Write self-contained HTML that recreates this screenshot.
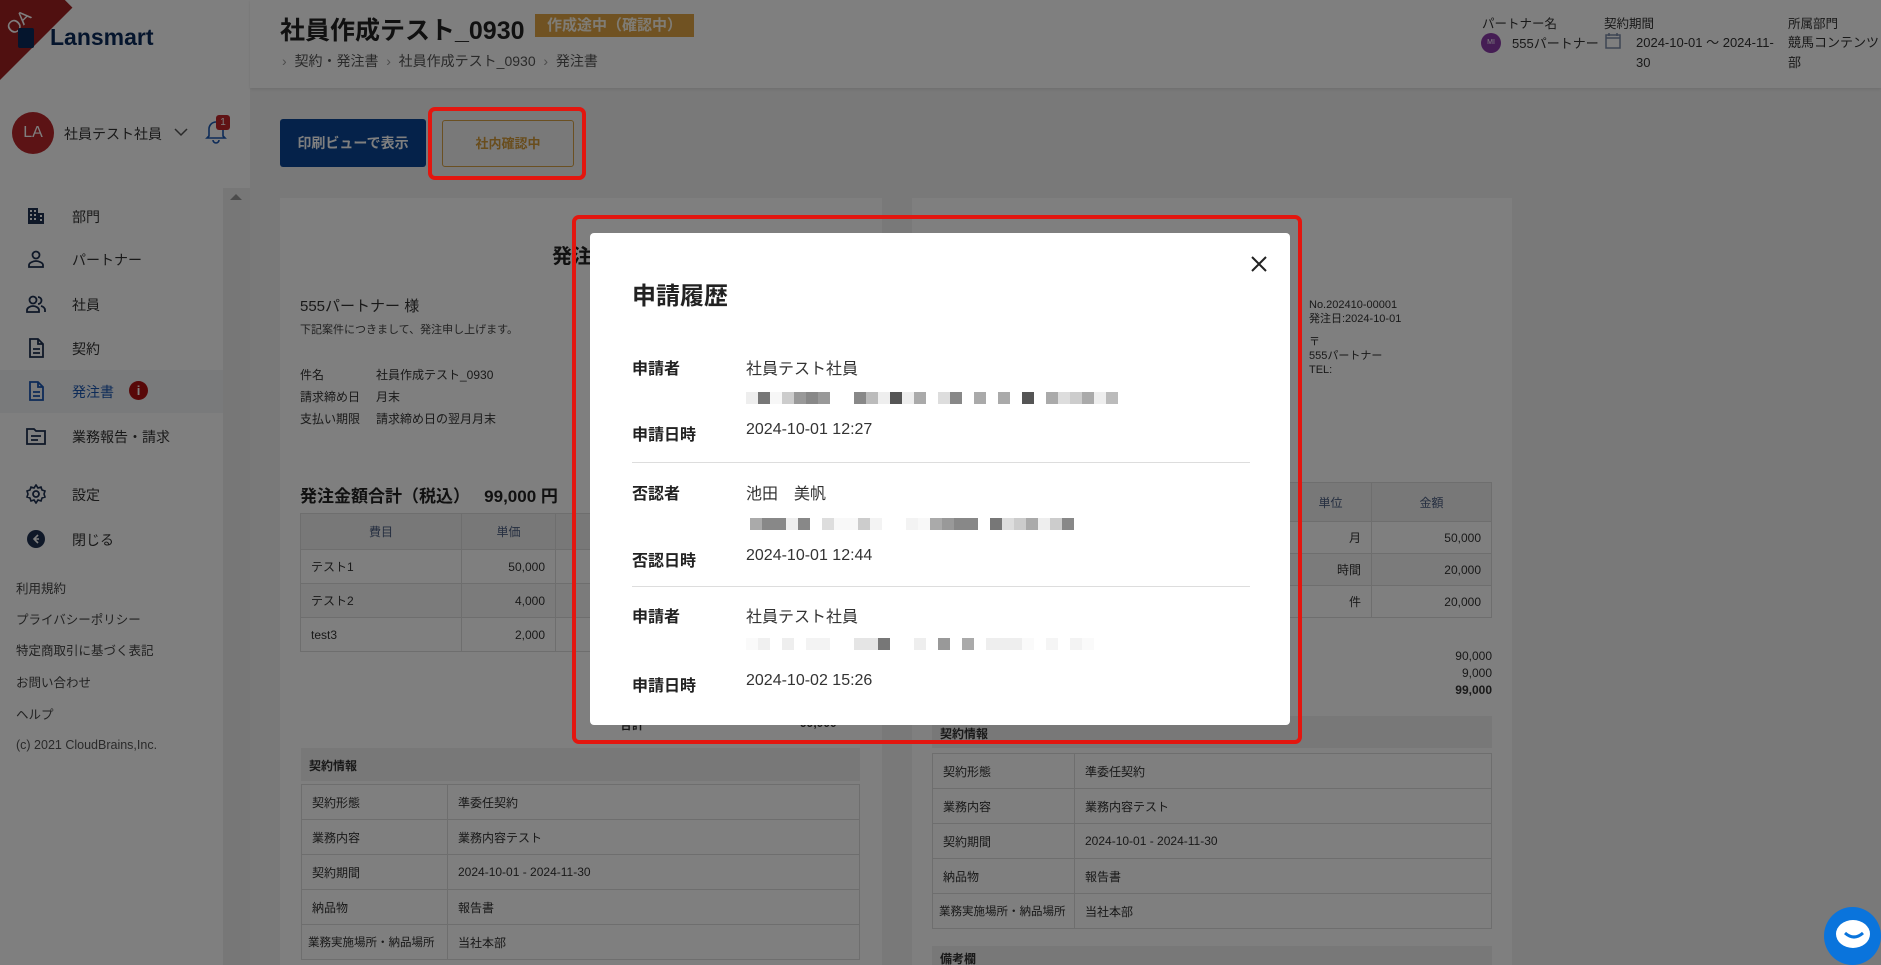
<!DOCTYPE html>
<html style="width:1881px;height:965px;overflow:hidden"><head><meta charset="utf-8"><style>
*{margin:0;padding:0;box-sizing:border-box}
body{width:1881px;height:965px;overflow:hidden;position:relative;background:#f2f2f2;font-family:"Liberation Sans","Noto Sans CJK JP",sans-serif;color:#333}
#w{position:absolute;left:0;top:0;width:1881px;height:965px;overflow:hidden}
.a{position:absolute;white-space:nowrap}
.side{position:absolute;left:0;top:0;width:250px;height:965px;background:#fff}
.nav{font-size:14px;color:#333}
.ic{position:absolute;left:26px;width:20px;height:20px}
.foot{font-size:12.5px;color:#444;left:16px}
.card{position:absolute;background:#fff}
table{border-collapse:collapse;position:absolute;font-size:12px;table-layout:fixed}
td{border:1px solid #ddd;padding:0 10px;color:#333;white-space:nowrap}
.ov{position:absolute;left:0;top:0;width:1881px;height:965px;background:rgba(0,0,0,.5)}
.red{position:absolute;border:4px solid #e3160f;border-radius:7px}
.lb{font-weight:bold;font-size:16px;color:#222;left:632px}
.vl{font-size:16px;color:#333;left:746px}
.px{position:absolute;height:12px;display:flex}
.px i{display:block;width:12px;height:12px}
</style></head><body><div id="w">
<!-- sidebar -->
<div class="side">
 <div class="a" style="left:-30px;top:-10px;width:120px;height:60px;background:#a02020;transform:rotate(-45deg);transform-origin:60px 60px"></div>
 <div class="a" style="left:6px;top:12px;color:#fff;font-size:18px;transform:rotate(-45deg)">QA</div>
 <div class="a" style="left:18px;top:28px;width:16px;height:20px;background:#0b2a5a;border-radius:2px"></div>
 <div class="a" style="left:50px;top:24px;font-size:23px;font-weight:bold;color:#0b2a5a">Lansmart</div>
 <div class="a" style="left:12px;top:112px;width:42px;height:42px;border-radius:50%;background:#b8262a;color:#fff;font-size:16px;text-align:center;line-height:42px">LA</div>
 <div class="a" style="left:64px;top:124px;font-size:14px;color:#333">社員テスト社員</div>
 <svg class="a" style="left:174px;top:127px" width="14" height="10"><path d="M1 2l6 6 6-6" fill="none" stroke="#555" stroke-width="1.5"/></svg>
 <svg class="a" style="left:205px;top:118px" width="22" height="26"><path d="M4 18V11a7 7 0 0 1 14 0v7l2 2H2z M8 22a3 3 0 0 0 6 0" fill="none" stroke="#1a56b0" stroke-width="1.6"/></svg>
 <div class="a" style="left:216px;top:115px;width:14px;height:15px;background:#c0262a;border-radius:3px;color:#fff;font-size:10px;text-align:center;line-height:15px">1</div>
 <div class="a" style="left:0;top:370px;width:223px;height:43px;background:#f3f4f7"></div>
 <div class="a" style="left:223px;top:188px;width:27px;height:777px;background:#eee"></div>
 <svg class="a" style="left:229px;top:193px" width="14" height="8"><path d="M1 7l6-6 6 6z" fill="#999"/></svg>
 <svg class="ic" style="top:206px" viewBox="0 0 20 20"><path d="M2 2h10v16H2zM12 7h6v11h-6z" fill="#1e3050"/><path d="M4 4h2v2H4zM8 4h2v2H8zM4 8h2v2H4zM8 8h2v2H8zM4 12h2v2H4zM8 12h2v2H8zM14 9h2v2h-2zM14 13h2v2h-2z" fill="#fff"/></svg>
 <div class="a nav" style="left:72px;top:207px">部門</div>
 <svg class="ic" style="top:249px" viewBox="0 0 20 20"><circle cx="10" cy="6" r="3.5" fill="none" stroke="#1e3050" stroke-width="1.8"/><path d="M3 18v-2c0-2 4-4 7-4s7 2 7 4v2z" fill="none" stroke="#1e3050" stroke-width="1.8"/></svg>
 <div class="a nav" style="left:72px;top:250px">パートナー</div>
 <svg class="ic" style="top:294px" viewBox="0 0 20 20"><circle cx="7" cy="6" r="3.5" fill="none" stroke="#1e3050" stroke-width="1.8"/><path d="M1 18v-2c0-2 3-4 6-4s6 2 6 4v2zM12 3a3.5 3.5 0 0 1 0 7M15 12c2 .5 4 2 4 4v2" fill="none" stroke="#1e3050" stroke-width="1.8"/></svg>
 <div class="a nav" style="left:72px;top:295px">社員</div>
 <svg class="ic" style="top:338px" viewBox="0 0 20 20"><path d="M4 1h8l5 5v13H4zM12 1v5h5M7 11h7M7 15h7" fill="none" stroke="#1e3050" stroke-width="1.8"/></svg>
 <div class="a nav" style="left:72px;top:339px">契約</div>
 <svg class="ic" style="top:381px" viewBox="0 0 20 20"><path d="M4 1h8l5 5v13H4zM12 1v5h5M7 11h7M7 15h7" fill="none" stroke="#1a56b0" stroke-width="1.8"/></svg>
 <div class="a nav" style="left:72px;top:382px;color:#1a56b0">発注書</div>
 <div class="a" style="left:129px;top:381px;width:19px;height:19px;border-radius:50%;background:#b01010;color:#fff;font-size:13px;font-weight:bold;text-align:center;line-height:19px">i</div>
 <svg class="ic" style="top:426px" viewBox="0 0 20 20"><path d="M1 3h7l2 2h9v13H1zM5 10h10M5 14h7" fill="none" stroke="#1e3050" stroke-width="1.8"/></svg>
 <div class="a nav" style="left:72px;top:427px">業務報告・請求</div>
 <svg class="ic" style="top:484px" viewBox="0 0 20 20"><circle cx="10" cy="10" r="3" fill="none" stroke="#1e3050" stroke-width="1.8"/><path d="M10 1l2 3 3-1 1 3 3 1-1 3 1 3-3 1-1 3-3-1-2 3-2-3-3 1-1-3-3-1 1-3-1-3 3-1 1-3 3 1z" fill="none" stroke="#1e3050" stroke-width="1.6"/></svg>
 <div class="a nav" style="left:72px;top:485px">設定</div>
 <svg class="ic" style="top:529px" viewBox="0 0 20 20"><circle cx="10" cy="10" r="9" fill="#1e3050"/><path d="M12 6l-4 4 4 4M8 10h5" fill="none" stroke="#fff" stroke-width="1.6"/></svg>
 <div class="a nav" style="left:72px;top:530px">閉じる</div>
 <div class="a foot" style="top:578px">利用規約</div>
 <div class="a foot" style="top:609px">プライバシーポリシー</div>
 <div class="a foot" style="top:640px">特定商取引に基づく表記</div>
 <div class="a foot" style="top:672px">お問い合わせ</div>
 <div class="a foot" style="top:704px">ヘルプ</div>
 <div class="a foot" style="top:738px;color:#555">(c) 2021 CloudBrains,Inc.</div>
</div>
<!-- header -->
<div class="a" style="left:250px;top:0;width:1631px;height:88px;background:#fff;box-shadow:0 1px 3px rgba(0,0,0,.1)"></div>
<div class="a" style="left:280px;top:11px;font-size:25px;font-weight:bold;color:#222">社員作成テスト_0930</div>
<div class="a" style="left:535px;top:14px;width:159px;height:23px;background:#e0a544;color:#fff8ea;font-size:15px;font-weight:bold;text-align:center;line-height:23px">作成途中（確認中）</div>
<div class="a" style="left:282px;top:51px;font-size:14px;color:#555"><span style="color:#999">›</span>&nbsp; 契約・発注書 &nbsp;<span style="color:#999">›</span>&nbsp; 社員作成テスト_0930 &nbsp;<span style="color:#999">›</span>&nbsp; 発注書</div>
<div class="a" style="left:1482px;top:13px;font-size:12.5px;color:#333">パートナー名</div>
<div class="a" style="left:1604px;top:13px;font-size:12.5px;color:#333">契約期間</div>
<div class="a" style="left:1788px;top:13px;font-size:12.5px;color:#333">所属部門</div>
<div class="a" style="left:1481px;top:33px;width:20px;height:20px;border-radius:50%;background:#8a3aa8;color:#fff;font-size:7px;text-align:center;line-height:20px">MI</div>
<div class="a" style="left:1512px;top:33px;font-size:13px;color:#333">555パートナー</div>
<svg class="a" style="left:1605px;top:32px" width="16" height="17"><rect x="1" y="3" width="14" height="13" fill="none" stroke="#7a8aa8" stroke-width="1.5"/><path d="M1 6h14M4 1v3M12 1v3" stroke="#7a8aa8" stroke-width="1.5"/></svg>
<div class="a" style="left:1636px;top:33px;font-size:13px;color:#333;line-height:20px">2024-10-01 〜 2024-11-<br>30</div>
<div class="a" style="left:1788px;top:33px;font-size:13px;color:#333;line-height:20px">競馬コンテンツ<br>部</div>
<!-- buttons -->
<div class="a" style="left:280px;top:119px;width:146px;height:48px;background:#0a4494;border-radius:3px;color:#fff;font-size:14px;font-weight:bold;text-align:center;line-height:48px">印刷ビューで表示</div>
<div class="a" style="left:442px;top:120px;width:132px;height:47px;border:1px solid #d7a044;border-radius:3px;color:#d39a3a;font-size:13px;font-weight:bold;text-align:center;line-height:45px">社内確認中</div>
<!-- left card -->
<div class="card" style="left:280px;top:198px;width:602px;height:767px"></div>
<div class="a" style="left:552px;top:240px;font-size:20px;font-weight:bold;color:#222">発注書</div>
<div class="a" style="left:300px;top:295px;font-size:15px">555パートナー 様</div>
<div class="a" style="left:300px;top:321px;font-size:11px;color:#444">下記案件につきまして、発注申し上げます。</div>
<div class="a" style="left:300px;top:364px;font-size:12px;line-height:22px">件名<br>請求締め日<br>支払い期限</div>
<div class="a" style="left:376px;top:364px;font-size:12px;line-height:22px">社員作成テスト_0930<br>月末<br>請求締め日の翌月月末</div>
<div class="a" style="left:300px;top:482px;font-size:17px;font-weight:bold;color:#222">発注金額合計（税込）&nbsp;&nbsp; 99,000 円</div>
<table style="left:300px;top:513px;width:560px">
<tr style="height:36px;background:#f0f0f0"><td style="width:161px;text-align:center;color:#4a5d80">費目</td><td style="width:94px;text-align:center;color:#4a5d80">単価</td><td></td></tr>
<tr style="height:34px"><td>テスト1</td><td style="text-align:right">50,000</td><td></td></tr>
<tr style="height:34px;background:#f7f7f7"><td>テスト2</td><td style="text-align:right">4,000</td><td></td></tr>
<tr style="height:34px"><td>test3</td><td style="text-align:right">2,000</td><td></td></tr>
</table>
<div class="a" style="left:620px;top:716px;font-size:12px;font-weight:bold">合計</div>
<div class="a" style="left:800px;top:716px;font-size:12px;font-weight:bold">99,000</div>
<div class="a" style="left:301px;top:748px;width:559px;height:33px;background:#f0f0f0;font-size:12px;font-weight:bold;padding:9px 8px">契約情報</div>
<table style="left:301px;top:784px;width:559px">
<tr style="height:35px"><td style="width:146px">契約形態</td><td>準委任契約</td></tr>
<tr style="height:35px"><td>業務内容</td><td>業務内容テスト</td></tr>
<tr style="height:35px"><td>契約期間</td><td>2024-10-01 - 2024-11-30</td></tr>
<tr style="height:35px"><td>納品物</td><td>報告書</td></tr>
<tr style="height:35px"><td style="font-size:11.5px;padding:0 6px">業務実施場所・納品場所</td><td>当社本部</td></tr>
</table>
<!-- right card -->
<div class="card" style="left:912px;top:198px;width:600px;height:767px"></div>
<div class="a" style="left:1309px;top:298px;font-size:11px;line-height:14px;color:#333">No.202410-00001<br>発注日:2024-10-01</div>
<div class="a" style="left:1309px;top:335px;font-size:11px;line-height:14px;color:#333">〒<br>555パートナー<br>TEL:</div>
<table style="left:932px;top:482px;width:560px">
<tr style="height:39px;background:#f0f0f0"><td></td><td style="width:82px;text-align:center;color:#4a5d80">単位</td><td style="width:120px;text-align:center;color:#4a5d80">金額</td></tr>
<tr style="height:32px"><td></td><td style="text-align:right">月</td><td style="text-align:right">50,000</td></tr>
<tr style="height:32px;background:#f7f7f7"><td></td><td style="text-align:right">時間</td><td style="text-align:right">20,000</td></tr>
<tr style="height:32px"><td></td><td style="text-align:right">件</td><td style="text-align:right">20,000</td></tr>
</table>
<div class="a" style="left:1392px;top:648px;width:100px;text-align:right;font-size:12px;line-height:17px">90,000<br>9,000<br><b>99,000</b></div>
<div class="a" style="left:932px;top:716px;width:560px;height:32px;background:#f0f0f0;font-size:12px;font-weight:bold;padding:9px 8px">契約情報</div>
<table style="left:932px;top:753px;width:560px">
<tr style="height:35px"><td style="width:142px">契約形態</td><td>準委任契約</td></tr>
<tr style="height:35px"><td>業務内容</td><td>業務内容テスト</td></tr>
<tr style="height:35px"><td>契約期間</td><td>2024-10-01 - 2024-11-30</td></tr>
<tr style="height:35px"><td>納品物</td><td>報告書</td></tr>
<tr style="height:35px"><td style="font-size:11.5px;padding:0 6px">業務実施場所・納品場所</td><td>当社本部</td></tr>
</table>
<div class="a" style="left:932px;top:946px;width:560px;height:19px;background:#f0f0f0;font-size:12px;font-weight:bold;padding:4px 8px;overflow:hidden">備考欄</div>
<!-- overlay -->
<div class="ov"></div>
<div class="red" style="left:428px;top:107px;width:158px;height:73px"></div>
<div class="red" style="left:572px;top:215px;width:730px;height:529px"></div>
<!-- modal -->
<div class="a" style="left:590px;top:233px;width:700px;height:492px;background:#fff;border-radius:4px"></div>
<svg class="a" style="left:1251px;top:256px" width="16" height="16"><path d="M1 1l14 14M15 1L1 15" stroke="#222" stroke-width="2"/></svg>
<div class="a" style="left:632px;top:276px;font-size:24px;font-weight:bold;color:#222">申請履歴</div>
<div class="a lb" style="top:355px">申請者</div><div class="a vl" style="top:355px">社員テスト社員</div>
<div class="px" style="left:746px;top:392px"><i style="background:#eee"></i><i style="background:#777"></i><i style="background:#f7f7f7"></i><i style="background:#ccc"></i><i style="background:#999"></i><i style="background:#888"></i><i style="background:#999"></i><i style="background:#fff"></i><i style="background:#fff"></i><i style="background:#888"></i><i style="background:#bbb"></i><i style="background:#eee"></i><i style="background:#555"></i><i style="background:#eee"></i><i style="background:#aaa"></i><i style="background:#fff"></i><i style="background:#ddd"></i><i style="background:#888"></i><i style="background:#fff"></i><i style="background:#aaa"></i><i style="background:#fff"></i><i style="background:#aaa"></i><i style="background:#fff"></i><i style="background:#555"></i><i style="background:#fff"></i><i style="background:#aaa"></i><i style="background:#ddd"></i><i style="background:#ccc"></i><i style="background:#aaa"></i><i style="background:#eee"></i><i style="background:#bbb"></i></div>
<div class="a lb" style="top:421px">申請日時</div><div class="a vl" style="top:421px">2024-10-01 12:27</div>
<div class="a" style="left:632px;top:462px;width:618px;height:1px;background:#ddd"></div>
<div class="a lb" style="top:480px">否認者</div><div class="a vl" style="top:480px">池田　美帆</div>
<div class="px" style="left:750px;top:518px"><i style="background:#aaa"></i><i style="background:#888"></i><i style="background:#888"></i><i style="background:#eee"></i><i style="background:#888"></i><i style="background:#fff"></i><i style="background:#ddd"></i><i style="background:#f8f8f8"></i><i style="background:#f8f8f8"></i><i style="background:#ccc"></i><i style="background:#f3f3f3"></i><i style="background:#fff"></i><i style="background:#fff"></i><i style="background:#f3f3f3"></i><i style="background:#f8f8f8"></i><i style="background:#aaa"></i><i style="background:#999"></i><i style="background:#888"></i><i style="background:#888"></i><i style="background:#fff"></i><i style="background:#777"></i><i style="background:#ddd"></i><i style="background:#ccc"></i><i style="background:#aaa"></i><i style="background:#eee"></i><i style="background:#ccc"></i><i style="background:#888"></i></div>
<div class="a lb" style="top:547px">否認日時</div><div class="a vl" style="top:547px">2024-10-01 12:44</div>
<div class="a" style="left:632px;top:586px;width:618px;height:1px;background:#ddd"></div>
<div class="a lb" style="top:603px">申請者</div><div class="a vl" style="top:603px">社員テスト社員</div>
<div class="px" style="left:746px;top:638px"><i style="background:#fafafa"></i><i style="background:#f0f0f0"></i><i style="background:#fff"></i><i style="background:#eee"></i><i style="background:#fff"></i><i style="background:#f3f3f3"></i><i style="background:#f3f3f3"></i><i style="background:#fff"></i><i style="background:#fff"></i><i style="background:#e5e5e5"></i><i style="background:#e5e5e5"></i><i style="background:#777"></i><i style="background:#fff"></i><i style="background:#fff"></i><i style="background:#eee"></i><i style="background:#fff"></i><i style="background:#999"></i><i style="background:#fff"></i><i style="background:#aaa"></i><i style="background:#fff"></i><i style="background:#eee"></i><i style="background:#eee"></i><i style="background:#eee"></i><i style="background:#fafafa"></i><i style="background:#fff"></i><i style="background:#f5f5f5"></i><i style="background:#fff"></i><i style="background:#f3f3f3"></i><i style="background:#fafafa"></i></div>
<div class="a lb" style="top:672px">申請日時</div><div class="a vl" style="top:672px">2024-10-02 15:26</div>
<!-- chat -->
<div class="a" style="left:1824px;top:907px;width:57px;height:58px;border-radius:50%;background:#0a74dc"></div>
<div class="a" style="left:1836px;top:920px;width:34px;height:28px;border-radius:50%;background:#fff"></div>
<svg class="a" style="left:1843px;top:930px" width="22" height="12"><path d="M2 3q9 8 18 0" fill="none" stroke="#0a74dc" stroke-width="3"/></svg>
</div></body></html>
